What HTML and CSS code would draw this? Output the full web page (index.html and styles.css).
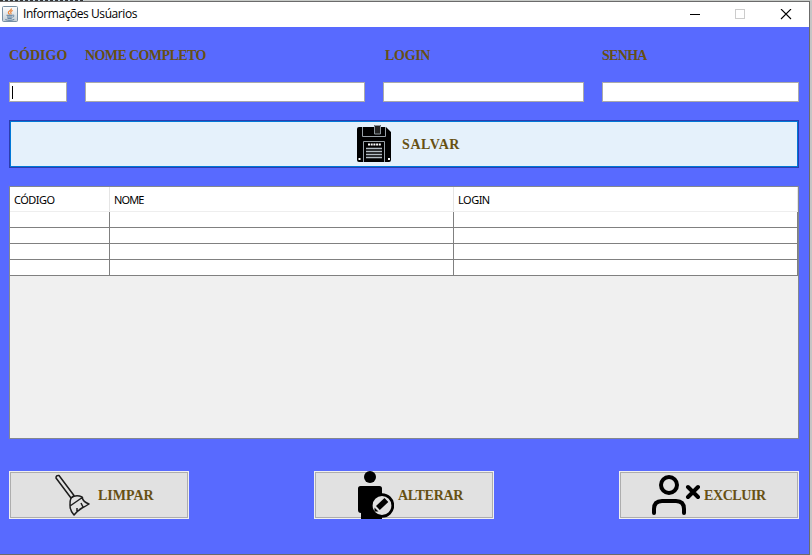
FILE: index.html
```html
<!DOCTYPE html>
<html lang="pt-BR">
<head>
<meta charset="utf-8">
<title>Informações Usúarios</title>
<link rel="stylesheet" href="styles.css">
</head>
<body>
<div class="backdrop"><i class="backdrop-text"></i></div>
<div class="window">
  <header class="titlebar">
    <svg class="app-icon" width="16" height="16" viewBox="0 0 16 16" fill="none">
      <defs><linearGradient id="tile" x1="0" y1="0" x2="0" y2="1"><stop offset="0" stop-color="#fff"/><stop offset="1" stop-color="#c3cdd5"/></linearGradient></defs>
      <rect x=".5" y=".5" width="15" height="15" rx="1" fill="url(#tile)" stroke="#7890a4"/>
      <path d="M9.5 2.5C9.8 4.4 6 5 6.3 6.7c.1.8 1 1.1 1.3 1.8M10.7 4.6C8.9 5.3 8.2 6 8.9 7c.4.6.2 1-.2 1.5" stroke="#ef8130" stroke-width="1.1"/>
      <path d="M4.5 9.3h6M5 11h5.2M5.5 12.4h4.2M10.5 9.2c2-.5 2 1.5 0 2M3.3 13.6c2.5 1 7 .9 9-.2" stroke="#5b7e9d"/>
    </svg>
    <h1 class="title">Informações Usúarios</h1>
    <svg class="controls" width="104" height="12" viewBox="0 0 104 12" fill="none">
      <path d="M0 5.500h10" stroke="#000"/>
      <rect x="45.5" y=".5" width="9" height="9" stroke="#ccc"/>
      <path d="M91 0l10 10M101 0l-10 10" stroke="#000" stroke-width="1.1"/>
    </svg>
  </header>
  <main class="content">
    <form class="fields">
      <label class="field"><span class="label">CÓDIGO</span><span class="input"><i class="caret"></i></span></label>
      <label class="field"><span class="label name">NOME COMPLETO</span><span class="input"></span></label>
      <label class="field"><span class="label login">LOGIN</span><span class="input"></span></label>
      <label class="field"><span class="label password">SENHA</span><span class="input"></span></label>
    </form>
    <button class="save" type="button">
      <svg width="34" height="38" viewBox="0 0 34 38">
        <path d="M2 2h15V0h7v2h5l5 5v28q0 2-2 2H2q-2 0-2-2V4q0-2 2-2z"/>
        <path d="M5.500 2v9.500h23V2M6.500 37V16.500h21V37" fill="none" stroke="#aab3ba" stroke-width=".9"/>
        <path d="M17.500 .5h6v8.500h-6z" fill="#222" stroke="#8d969d"/>
        <path d="M11 19.500h13" stroke="#fff" stroke-width="2" stroke-dasharray="2 .7"/>
        <path d="M9 23.500h16M9 26.500h16M9 29.500h16M9 32.500h16" stroke="#b4bdc3" stroke-width="1.300"/>
        <path d="M1.500 33h2v2h-2zM31 33h2v2h-2z" fill="#fff"/>
      </svg>
      <span>SALVAR</span>
    </button>
    <div class="table-wrap">
      <table class="table">
        <colgroup><col class="c1"><col class="c2"><col class="c2"></colgroup>
        <thead><tr><th>CÓDIGO</th><th class="tight">NOME</th><th>LOGIN</th></tr></thead>
        <tbody>
          <tr><td></td><td></td><td></td></tr>
          <tr><td></td><td></td><td></td></tr>
          <tr><td></td><td></td><td></td></tr>
          <tr><td></td><td></td><td></td></tr>
        </tbody>
      </table>
    </div>
    <div class="actions">
      <button class="action clear" type="button">
        <svg width="36" height="42" viewBox="0 0 36 42" fill="none" stroke="#1c1c1c" stroke-width="1.500" stroke-linejoin="round">
          <path d="M1 4q0-3 3-2.500L19 21.500l-3 2.500z"/>
          <path d="M16 24q5-4 11-1 1 5 7 7-3 2-7 4-5 3-8 7-4-4-4-10 0-5 1-7zM15 32l13-9M22 37v-3M28 33l-2-4"/>
        </svg>
        <span>LIMPAR</span>
      </button>
      <button class="action edit" type="button">
        <svg width="36" height="48" viewBox="0 0 36 48">
          <circle cx="12" cy="6" r="6"/>
          <path d="M2.500 15h19q2.500 0 2.500 2.500V48H3v-6q-3 0-3-3V17.500Q0 15 2.500 15z"/>
          <circle cx="24" cy="34.500" r="10.800" fill="#e1e1e1" stroke="#000" stroke-width="2.800"/>
          <path d="M18 35l8.500-8 3.800 4-8.500 8zM16.500 36.500l4 4H16.500z"/>
        </svg>
        <span>ALTERAR</span>
      </button>
      <button class="action remove" type="button">
        <svg width="50" height="42" viewBox="0 0 50 42" fill="none" stroke="#000" stroke-width="4" stroke-linecap="round">
          <circle cx="17" cy="11" r="8"/>
          <path d="M2 39v-4q0-8 8-8h14q8 0 8 8v4M36 13l10 10M46 13L36 23"/>
        </svg>
        <span>EXCLUIR</span>
      </button>
    </div>
  </main>
</div>
</body>
</html>
```
FILE: styles.css
```css
* { box-sizing: border-box; }
body { margin: 0; width: 812px; height: 555px; overflow: hidden; background: #c5c5c5; }
.backdrop { height: 1px; background: #c8cbc8; }
.backdrop-text { display: block; width: 84px; height: 1px; background: repeating-linear-gradient(90deg, #333 0 3px, #bdd2df 3px 5px); }
.window { width: 810px; height: 554px; border: solid #6b6b6b; border-width: 1px 1px 1px 0; background: #586aff; }
.titlebar { display: flex; align-items: center; height: 25px; padding: 0 15px 0 2px; background: #fff; }
.app-icon { margin-top: -1px; }
.title { margin: -1px 0 0 5px; font: 12px/16px "Open Sans", "Noto Sans", sans-serif; letter-spacing: -0.43px; color: #000; white-space: nowrap; }
.controls { margin-left: auto; }
.content { padding: 20px 10px 0 9px; color: #675013; font: bold 14px/18px "Liberation Serif", serif; }
.fields { display: grid; grid-template-columns: 58px 280px 201px 197px; gap: 18px; }
.field { display: flex; flex-direction: column; gap: 17px; }
.label { white-space: nowrap; }
.name { letter-spacing: -0.6px; }
.login { padding-left: 2px; letter-spacing: -0.3px; }
.password { letter-spacing: -0.7px; }
.input { height: 20px; padding: 3px 2px; background: #fff; border: 1px solid #aaa; }
.caret { display: block; width: 1px; height: 13px; background: #000; }
button { font: inherit; color: inherit; border-radius: 0; white-space: nowrap; display: flex; align-items: center; }
button span { padding-top: 2px; }
.save { width: 100%; height: 48px; margin-top: 18px; padding: 0 0 0 347px; gap: 11px; letter-spacing: 0.6px; background: #e5f1fb; border: 1px solid #2c3caf; box-shadow: inset 0 0 0 1px #0078d7; }
.table-wrap { height: 253px; margin-top: 18px; border: 1px solid #828790; background: #f0f0f0; }
.table { table-layout: fixed; width: 788px; border-collapse: separate; border-spacing: 0; font: 11px/14px "Noto Sans", sans-serif; letter-spacing: -0.5px; color: #000; }
.c1 { width: 100px; }
.c2 { width: 344px; }
th { height: 25px; padding: 1px 0 0 4px; font-weight: normal; text-align: left; background: #fff; border-bottom: 1px solid #eee; box-shadow: inset -1px 0 #e5e5e5; }
.tight { letter-spacing: -0.9px; }
td { height: 16px; padding: 0; background: #fff; border: solid #808080; border-width: 0 1px 1px 0; }
.actions { display: flex; justify-content: space-between; margin-top: 32px; }
.action { width: 180px; height: 48px; padding: 0; background: #e1e1e1; border: 1px solid #f0f0f0; box-shadow: inset 0 0 0 1px #adadad; }
.action svg { flex: none; }
.clear { padding-left: 45px; gap: 7px; }
.edit { padding-left: 43px; gap: 4px; letter-spacing: -0.3px; }
.remove { padding-left: 32px; gap: 2px; letter-spacing: -0.4px; }
```
